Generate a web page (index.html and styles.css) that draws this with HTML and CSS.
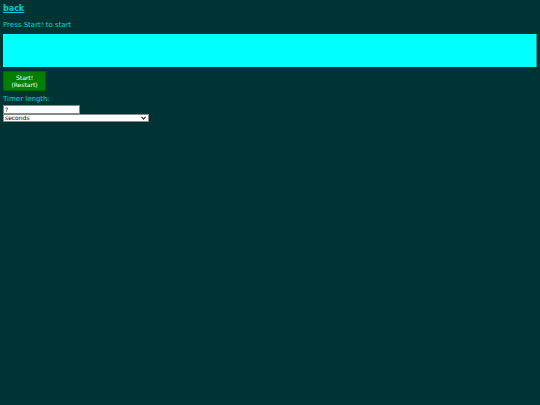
FILE: index.html
```html
<!DOCTYPE html>
<html>
<head>
<meta charset="utf-8">
<link rel="stylesheet" href="styles.css">
</head>
<body>
<a class="back" href="#">back</a>
<p class="status">Press Start! to start</p>
<div class="display"></div>
<button class="start">Start!<br>(Restart)</button>
<div class="label">Timer length:</div>
<input class="length" type="text" value="?">
<div class="unit-wrap">
  <select class="unit"><option>seconds</option></select>
  <svg class="arrow" width="5" height="4" viewBox="0 0 5 4"><path d="M0.5 0.8 L2.5 3 L4.5 0.8" fill="none" stroke="#333" stroke-width="1.2"/></svg>
</div>
</body>
</html>
```
FILE: styles.css
```css
html, body {
  background: #003333;
}
body {
  margin: 3px;
  font-family: "DejaVu Sans", Verdana, sans-serif;
  color: #00d8d8;
  font-size: 7px;
}
.back {
  display: block;
  color: #00cccc;
  font-weight: bold;
  font-size: 8px;
  line-height: 11px;
}
.status {
  margin: 7px 0 4px 0;
  line-height: 9px;
}
.display {
  height: 33px;
  background: #00ffff;
  border-right: 1px solid #20a0a0;
  margin-bottom: 4px;
}
.start {
  display: block;
  width: 43px;
  height: 20px;
  background: #007f00;
  color: #ffffff;
  border: 1px solid #006400;
  font-family: "DejaVu Sans", Verdana, sans-serif;
  font-size: 6px;
  line-height: 7px;
  padding: 0;
}
.label {
  margin-top: 3px;
  line-height: 11px;
}
.length {
  display: block;
  width: 77px;
  height: 9px;
  box-sizing: border-box;
  font-size: 6px;
  line-height: 7px;
  padding: 0 1px;
  border: 1px solid #888;
  margin: 0;
  color: #000;
  font-family: "DejaVu Sans", Verdana, sans-serif;
}
.unit-wrap {
  position: relative;
  width: 146px;
  height: 8px;
}
.unit {
  display: block;
  width: 146px;
  height: 8px;
  box-sizing: border-box;
  font-size: 6px;
  line-height: 6px;
  padding: 0 1px;
  border: 1px solid #888;
  border-radius: 0;
  margin: 0;
  background: #fff;
  color: #000;
  appearance: none;
  -webkit-appearance: none;
  font-family: "DejaVu Sans", Verdana, sans-serif;
}
.arrow {
  position: absolute;
  right: 3px;
  top: 2px;
}
```
